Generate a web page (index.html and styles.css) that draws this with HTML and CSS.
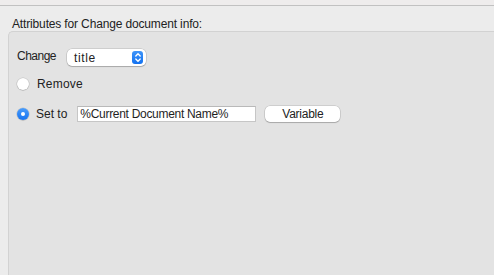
FILE: index.html
```html
<!DOCTYPE html>
<html lang="en">
<head>
    <meta charset="UTF-8">
    <title>Change document info</title>
    <link rel="stylesheet" href="styles.css">
</head>
<body>
    <div class="topbar"></div>
    <div class="title">Attributes for Change document info:</div>

    <!-- Attributes group box -->
    <div class="group">
        <div class="row row-change">
            <span class="label change-label">Change</span>
            <div class="popup">
                <span class="popup-text">title</span>
                <span class="stepper">
                    <svg width="10" height="13" viewBox="0 0 10 13">
                        <path d="M2.8 5 L5 2.8 L7.2 5 M2.8 8 L5 10.2 L7.2 8" fill="none" stroke="#fff" stroke-width="1.4" stroke-linecap="round" stroke-linejoin="round"/>
                    </svg>
                </span>
            </div>
        </div>

        <div class="row row-remove">
            <span class="radio"></span>
            <span class="label remove-label">Remove</span>
        </div>

        <div class="row row-set">
            <span class="radio checked"></span>
            <span class="label set-label">Set to</span>
            <div class="field">%Current Document Name%</div>
            <button class="button">Variable</button>
        </div>
    </div>
</body>
</html>
```

FILE: styles.css
```css
html, body {
    margin: 0;
    height: 100%;
}
body {
    font-family: "Liberation Sans", Arial, sans-serif;
    font-size: 12px;
    color: #222;
    background-color: #ececec;
    display: flex;
    flex-direction: column;
    overflow: hidden;
}
.topbar {
    height: 5px;
    background-color: #eeecec;
    border-bottom: 1px solid #c1c1c1;
    flex-shrink: 0;
}
.title {
    padding: 10px 0 0 12px;
    letter-spacing: -0.15px;
    line-height: 16px;
    height: 15px;
}
.group {
    flex: 1;
    margin-left: 8px;
    background-color: #e3e3e3;
    border: 1px solid #d2d2d2;
    border-right: none;
    border-bottom: none;
    border-radius: 5px 0 0 0;
    padding: 16px 0 0 8px;
}
.row {
    display: flex;
    align-items: center;
}
.row-change {
    height: 18px;
}
.label {
    line-height: 16px;
}
.change-label {
    letter-spacing: -0.5px;
    margin-top: -2px;
}
.popup {
    margin-left: 11px;
    width: 79px;
    height: 17px;
    background-color: #fff;
    border-radius: 5px;
    box-shadow: 0 0 0 0.5px rgba(0, 0, 0, 0.18), 0 1px 1px rgba(0, 0, 0, 0.18);
    display: flex;
    align-items: center;
    justify-content: space-between;
    box-sizing: border-box;
    padding: 0 3px 0 7px;
}
.popup-text {
    letter-spacing: 0.6px;
    line-height: 16px;
    padding-top: 1px;
}
.stepper {
    width: 11px;
    height: 13px;
    border-radius: 3px;
    background: linear-gradient(#3f95f9, #1271f0);
    display: flex;
    align-items: center;
    justify-content: center;
}
.row-remove {
    margin-top: 11px;
    height: 14px;
}
.remove-label {
    letter-spacing: 0.2px;
}
.radio {
    width: 12px;
    height: 12px;
    border-radius: 50%;
    background-color: #fff;
    box-shadow: 0 0 0 0.5px rgba(0, 0, 0, 0.15), 0 0.5px 1px rgba(0, 0, 0, 0.2);
    margin-right: 8px;
    flex-shrink: 0;
    position: relative;
}
.radio.checked {
    background: linear-gradient(#4a9cfa, #1673f0);
}
.radio.checked::after {
    content: "";
    position: absolute;
    left: 4px;
    top: 4px;
    width: 4px;
    height: 4px;
    border-radius: 50%;
    background-color: #fff;
}
.row-set {
    margin-top: 14px;
    height: 17px;
}
.set-label {
    margin-left: -1px;
    margin-right: 10px;
}
.field {
    width: 179px;
    height: 16px;
    box-sizing: border-box;
    background-color: #fff;
    border: 1px solid #c6c6c6;
    border-top-color: #b9b9b9;
    padding: 0 0 0 2px;
    letter-spacing: -0.3px;
    line-height: 15px;
    color: #1f1f1f;
}
.button {
    margin-left: 9px;
    width: 75px;
    height: 16px;
    padding: 0;
    border: none;
    background-color: #fff;
    border-radius: 5px;
    box-shadow: 0 0 0 0.5px rgba(0, 0, 0, 0.18), 0 1px 1px rgba(0, 0, 0, 0.18);
    font-family: inherit;
    font-size: 12px;
    letter-spacing: -0.25px;
    color: #222;
    line-height: 16px;
}
```
